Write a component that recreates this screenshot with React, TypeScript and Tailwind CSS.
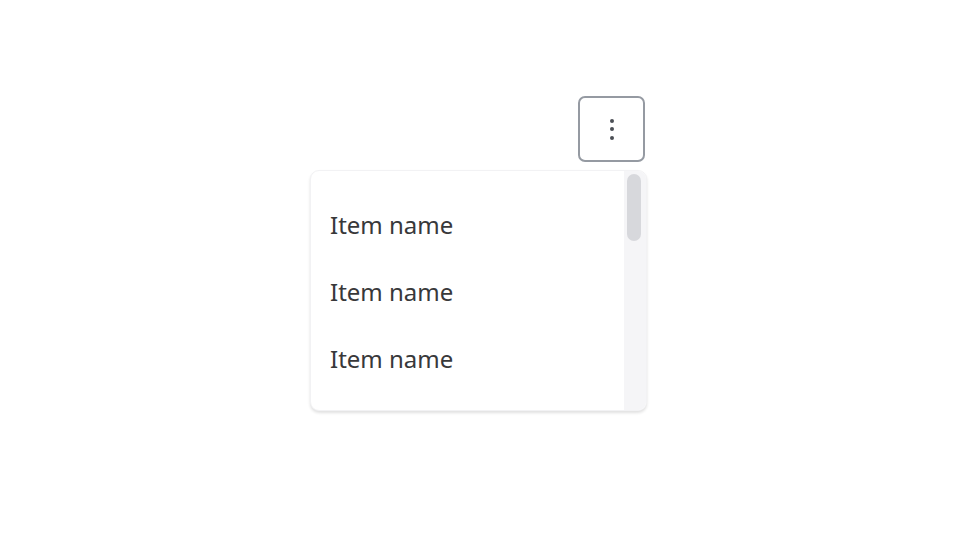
import React from "react";

export default function App() {
  const items = ["Item name", "Item name", "Item name"];
  return (
    <div className="w-[962px] h-[534px] bg-white" style={{ fontFamily: '"Noto Sans", sans-serif' }}>
      <div className="pt-[96px] pl-[310px]">
        <div className="w-[337px] flex flex-col items-end">
          <button className="mr-[2px] w-[67px] h-[66px] rounded-[7px] border-2 border-[#959aa2] bg-white flex flex-col items-center justify-center gap-[4.5px]">
            <span className="w-[4px] h-[4px] rounded-full bg-[#4b4f55]" />
            <span className="w-[4px] h-[4px] rounded-full bg-[#4b4f55]" />
            <span className="w-[4px] h-[4px] rounded-full bg-[#4b4f55]" />
          </button>
          <div className="mt-[8px] w-[337px] h-[241px] rounded-[9px] bg-white border border-[#f2f2f4] shadow-[0_2px_3px_rgba(0,0,0,0.12)] flex overflow-hidden">
            <div className="flex-1 pt-[20px] flex flex-col">
              {items.map((t, i) => (
                <div key={i} className="h-[67px] flex items-center pl-[19px] text-[24px] text-[#38383a]">
                  {t}
                </div>
              ))}
            </div>
            <div className="w-[22px] bg-[#f5f5f7] pt-[3px] pl-[3px] pr-[5px]">
              <div className="w-[14px] h-[67px] rounded-full bg-[#d7d8dc]" />
            </div>
          </div>
        </div>
      </div>
    </div>
  );
}
